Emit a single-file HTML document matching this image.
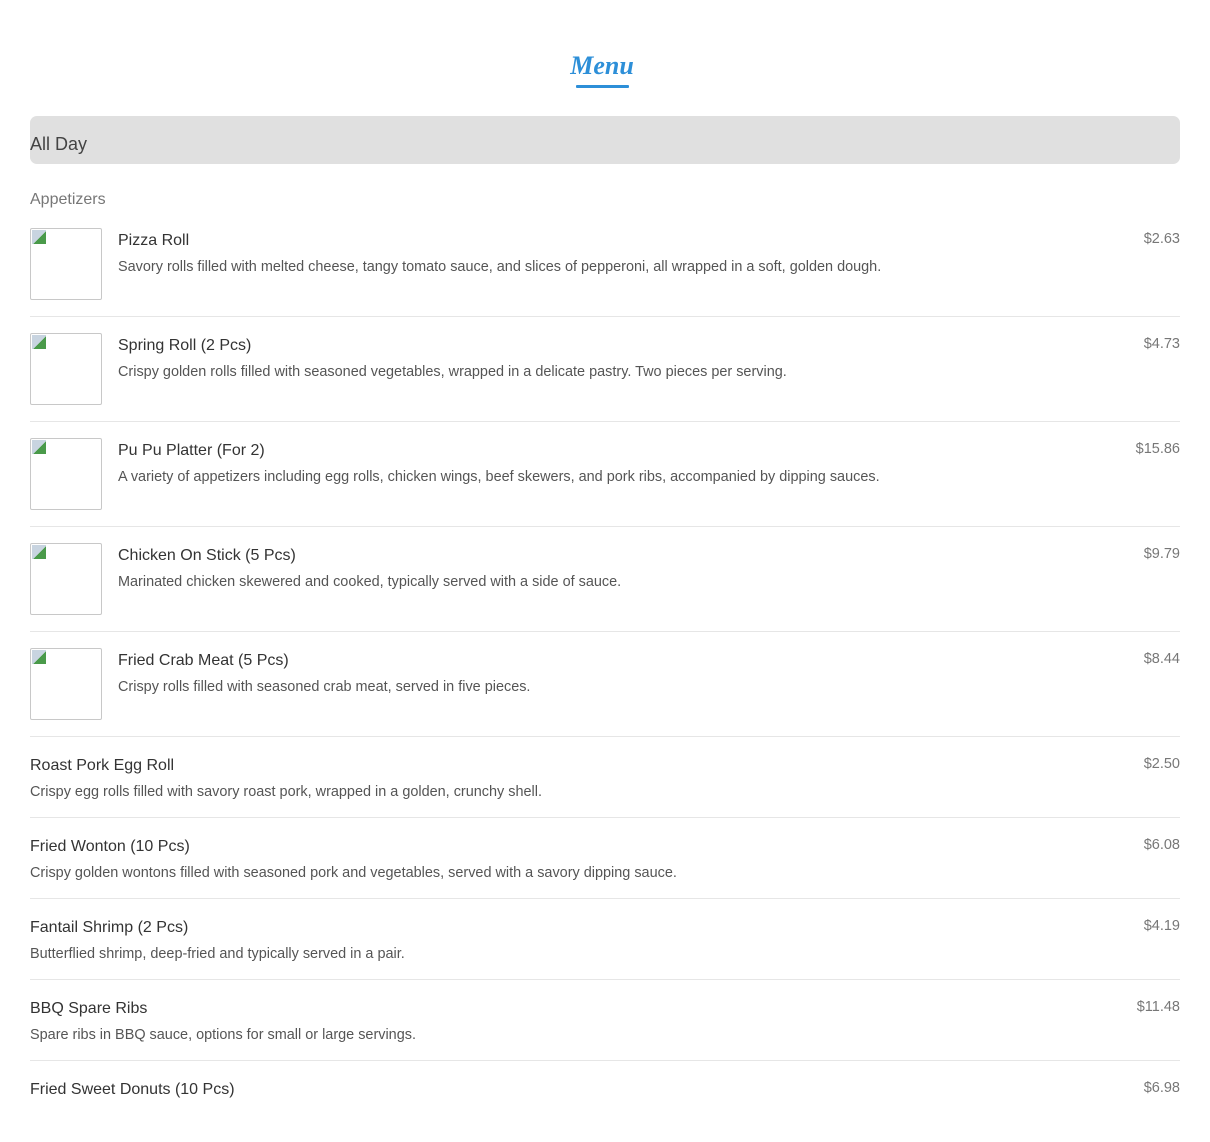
<!DOCTYPE html>
<html><head><meta charset="utf-8"><style>
*{margin:0;padding:0;box-sizing:border-box}
html,body{width:1210px;height:1086px;overflow:hidden;background:#fff;font-family:"Liberation Sans",sans-serif}
.title{position:absolute;left:-3px;width:1210px;top:51px;text-align:center;font-family:"Liberation Serif",cursive;font-style:italic;font-weight:bold;font-size:26px;color:#2d8fd8}
.uline{position:absolute;left:576px;top:85px;width:53px;height:3px;background:#2d8fd8;border-radius:1px}
.bar{position:absolute;left:30px;top:116px;width:1150px;height:48px;background:#e0e0e0;border-radius:7px}
.bar span{position:absolute;left:0;top:18px;font-size:18px;color:#444}
.sec{position:absolute;left:30px;top:191px;font-size:16px;color:#777}
.row{position:absolute;left:30px;width:1150px;border-bottom:1px solid #e6e6e6}
.img{position:absolute;left:0;top:16px;width:72px;height:72px;border:1px solid #c8c8c8;border-radius:2px}
.img:before{content:"";position:absolute;left:1px;top:1px;width:14px;height:14px;background:linear-gradient(135deg,#c8d4e0 55%,#4a9a4a 55%);}
.n{position:absolute;top:20px;font-size:16px;color:#333;white-space:nowrap}
.d{position:absolute;top:47px;font-size:14.45px;color:#555;white-space:nowrap}
.p{position:absolute;right:0;top:19px;font-size:14.5px;color:#777}
</style></head><body>
<div class="title">Menu</div><div class="uline"></div>
<div class="bar"><span>All Day</span></div>
<div class="sec">Appetizers</div>

<div class="row" style="top:212px;height:105px"><div class="img"></div><div class="n" style="left:88px">Pizza Roll</div><div class="d" style="left:88px">Savory rolls filled with melted cheese, tangy tomato sauce, and slices of pepperoni, all wrapped in a soft, golden dough.</div><div class="p">$2.63</div></div>
<div class="row" style="top:317px;height:105px"><div class="img"></div><div class="n" style="left:88px">Spring Roll (2 Pcs)</div><div class="d" style="left:88px">Crispy golden rolls filled with seasoned vegetables, wrapped in a delicate pastry. Two pieces per serving.</div><div class="p">$4.73</div></div>
<div class="row" style="top:422px;height:105px"><div class="img"></div><div class="n" style="left:88px">Pu Pu Platter (For 2)</div><div class="d" style="left:88px">A variety of appetizers including egg rolls, chicken wings, beef skewers, and pork ribs, accompanied by dipping sauces.</div><div class="p">$15.86</div></div>
<div class="row" style="top:527px;height:105px"><div class="img"></div><div class="n" style="left:88px">Chicken On Stick (5 Pcs)</div><div class="d" style="left:88px">Marinated chicken skewered and cooked, typically served with a side of sauce.</div><div class="p">$9.79</div></div>
<div class="row" style="top:632px;height:105px"><div class="img"></div><div class="n" style="left:88px">Fried Crab Meat (5 Pcs)</div><div class="d" style="left:88px">Crispy rolls filled with seasoned crab meat, served in five pieces.</div><div class="p">$8.44</div></div>

<div class="row" style="top:737px;height:81px"><div class="n" style="left:0">Roast Pork Egg Roll</div><div class="d" style="left:0">Crispy egg rolls filled with savory roast pork, wrapped in a golden, crunchy shell.</div><div class="p">$2.50</div></div>
<div class="row" style="top:818px;height:81px"><div class="n" style="left:0">Fried Wonton (10 Pcs)</div><div class="d" style="left:0">Crispy golden wontons filled with seasoned pork and vegetables, served with a savory dipping sauce.</div><div class="p">$6.08</div></div>
<div class="row" style="top:899px;height:81px"><div class="n" style="left:0">Fantail Shrimp (2 Pcs)</div><div class="d" style="left:0">Butterflied shrimp, deep-fried and typically served in a pair.</div><div class="p">$4.19</div></div>
<div class="row" style="top:980px;height:81px"><div class="n" style="left:0">BBQ Spare Ribs</div><div class="d" style="left:0">Spare ribs in BBQ sauce, options for small or large servings.</div><div class="p">$11.48</div></div>
<div class="row" style="top:1061px;height:81px;border:none"><div class="n" style="left:0">Fried Sweet Donuts (10 Pcs)</div><div class="p">$6.98</div></div>
</body></html>
